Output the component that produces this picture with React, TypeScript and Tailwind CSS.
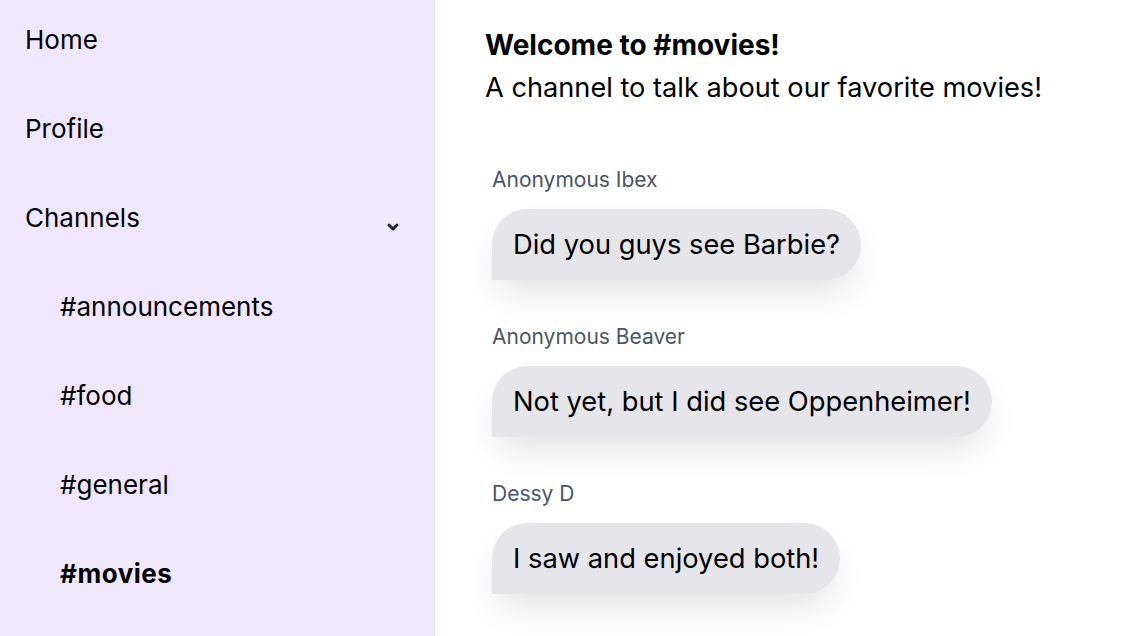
import React from "react";

type Message = {
  author: string;
  text: string;
};

const channels = ["announcements", "food", "general", "movies"];
const activeChannel = "movies";

const messages: Message[] = [
  { author: "Anonymous Ibex", text: "Did you guys see Barbie?" },
  { author: "Anonymous Beaver", text: "Not yet, but I did see Oppenheimer!" },
  { author: "Dessy D", text: "I saw and enjoyed both!" },
];

const Chevron = () => (
  <svg width="14" height="10" viewBox="0 0 14 10" className="mt-[18px]">
    <polyline
      points="3,3 7,7 11,3"
      fill="none"
      stroke="#1f2530"
      strokeWidth="3"
      strokeLinecap="round"
      strokeLinejoin="round"
    />
  </svg>
);

const Sidebar = () => {
  return (
    <nav className="flex w-[435px] shrink-0 flex-col gap-[57px] border-r border-[#e5e7eb] bg-[#efe7fd] pt-6 pr-[34px] text-[26px] leading-8 text-black">
      <a className="pl-[25px]">Home</a>
      <a className="pl-[25px]">Profile</a>
      <div className="flex items-center justify-between pl-[25px]">
        <span>Channels</span>
        <Chevron />
      </div>
      {channels.map((c) => (
        <a
          key={c}
          className={"pl-[60px] " + (c === activeChannel ? "font-bold tracking-[0.02em]" : "")}
        >
          #{c}
        </a>
      ))}
    </nav>
  );
};

const Bubble = ({ author, text }: Message) => (
  <div className="flex flex-col items-start pl-[7px]">
    <div className="text-[21px] leading-7 text-[#4b5563]">{author}</div>
    <div className="mt-[15px] rounded-[36px] rounded-bl-none bg-[#e5e5ea] px-[21px] py-[19.5px] text-[27.3px] leading-8 shadow-[0_18px_36px_-8px_rgba(0,0,0,0.13)]">
      {text}
    </div>
  </div>
);

export default function App() {
  return (
    <div
      className="flex h-screen overflow-hidden bg-white"
      style={{ fontFamily: "Inter, 'Noto Sans', sans-serif" }}
    >
      <Sidebar />
      <main className="flex flex-1 flex-col pt-[29px] pl-[50px]">
        <h1 className="text-[28px] font-bold leading-8">Welcome to #movies!</h1>
        <p className="mt-[11px] text-[27.2px] leading-8">A channel to talk about our favorite movies!</p>
        <div className="mt-[62px] flex flex-col gap-[43px]">
          {messages.map((m) => (
            <Bubble key={m.author} {...m} />
          ))}
        </div>
      </main>
    </div>
  );
}
